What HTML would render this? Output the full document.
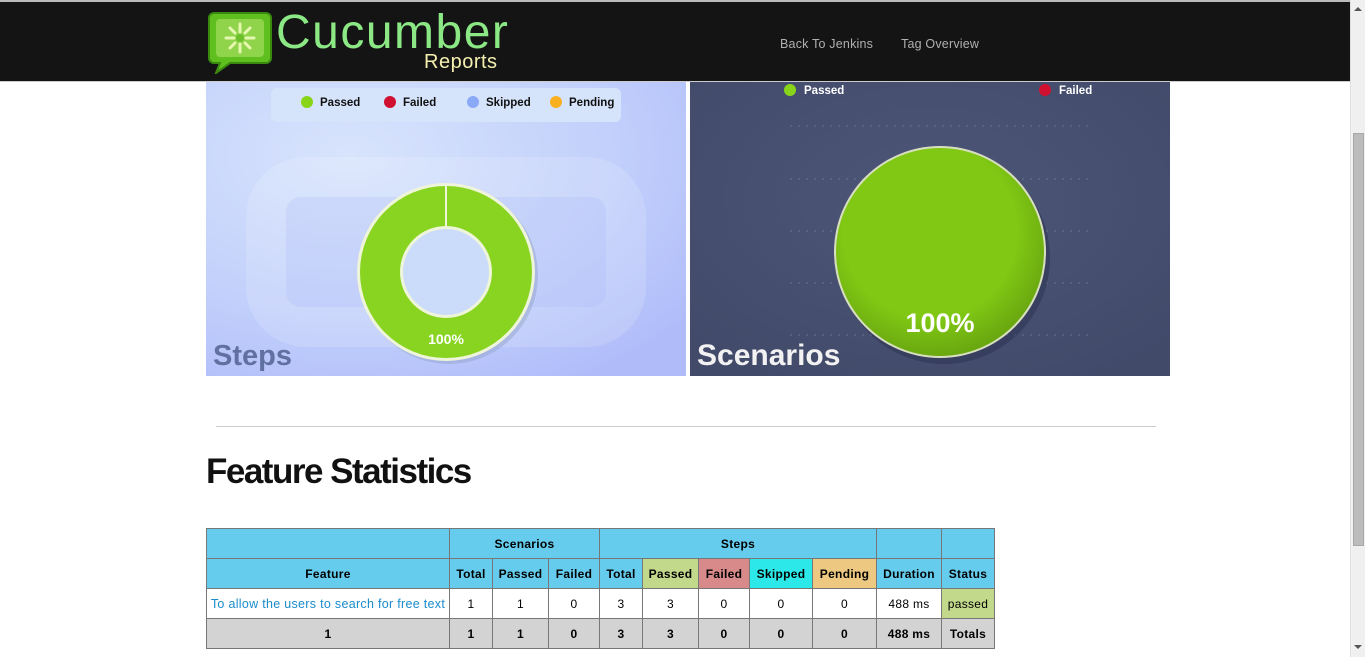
<!DOCTYPE html>
<html><head><meta charset="utf-8"><style>
*{margin:0;padding:0;box-sizing:border-box}
body{width:1365px;height:657px;overflow:hidden;background:#fff;font-family:"Liberation Sans",sans-serif;position:relative}
.hdr{position:absolute;left:0;top:0;width:1350px;height:82px;background:#141414;border-top:2px solid #bbb;border-bottom:1px solid #ccc}
.nav{position:absolute;top:35px;font-size:12.5px;color:#b0b0b0;letter-spacing:0.2px}
.sb{position:absolute;right:0;top:0;width:15px;height:657px;background:#f0f0f0;border-left:1px solid #e0e0e0}
.thumb{position:absolute;left:2px;top:133px;width:11px;height:413px;background:#bcbcbc;border:1px solid #a8a8a8}
table{position:absolute;left:206px;top:528px;border-collapse:collapse;font-size:12px;letter-spacing:0.3px}
td{border:1px solid #777;text-align:center;height:30px;padding:0 2px}
.h td{background:#66ccee;font-weight:bold}
.t td{background:#d3d3d3;font-weight:bold}
</style></head><body>
<div class="hdr">
<svg style="position:absolute;left:208px;top:10px" width="64" height="62" viewBox="0 0 64 62">
<path d="M6 1h52a5 5 0 0 1 5 5v40a5 5 0 0 1-5 5H22L8 61l4-10H6a5 5 0 0 1-5-5V6a5 5 0 0 1 5-5z" fill="#5fbf1f" stroke="#3a8a10" stroke-width="2"/>
<rect x="8" y="7" width="48" height="38" rx="4" fill="#8fd44a"/>
<g stroke="#e6f7b0" stroke-width="3" stroke-linecap="round">
<path d="M32 12v8M32 32v8M18 26h8M38 26h8M22 16l5 5M37 31l5 5M42 16l-5 5M27 31l-5 5"/></g>
<circle cx="32" cy="26" r="4" fill="#6bbf2a"/>
</svg>
<div style="position:absolute;left:276px;top:3px;font-size:48px;color:#8be884;letter-spacing:1.5px">Cucumber</div>
<div style="position:absolute;left:424px;top:49px;font-size:20px;color:#f5f0b0;letter-spacing:0.5px">Reports</div>
<div class="nav" style="left:780px">Back To Jenkins</div>
<div class="nav" style="left:901px">Tag Overview</div>
</div>

<svg style="position:absolute;left:206px;top:82px" width="480" height="294">
<defs><radialGradient id="g1" cx="0.3" cy="0.25" r="0.9"><stop offset="0" stop-color="#d8e4fc"/><stop offset="0.6" stop-color="#c2d0fb"/><stop offset="1" stop-color="#b0bcfa"/></radialGradient></defs>
<rect width="480" height="294" fill="url(#g1)"/>
<rect x="40" y="75" width="400" height="190" rx="60" fill="#fff" opacity="0.15"/>
<rect x="80" y="115" width="320" height="110" rx="15" fill="#a8b8f8" opacity="0.25"/>
<rect x="65" y="6" width="350" height="34" rx="6" fill="#d6e4fb"/>
<circle cx="101" cy="20" r="6" fill="#88d418"/><text x="114" y="24" font-size="11.5" font-weight="bold" fill="#111">Passed</text>
<circle cx="184" cy="20" r="6" fill="#d01030"/><text x="197" y="24" font-size="11.5" font-weight="bold" fill="#111">Failed</text>
<circle cx="267" cy="20" r="6" fill="#8aaaf8"/><text x="280" y="24" font-size="11.5" font-weight="bold" fill="#111">Skipped</text>
<circle cx="350" cy="20" r="6" fill="#f8b020"/><text x="363" y="24" font-size="11.5" font-weight="bold" fill="#111">Pending</text>
<circle cx="243" cy="193" r="89" fill="#8a9ac0" opacity="0.4"/>
<circle cx="240" cy="190" r="89" fill="#eef5d8"/>
<circle cx="240" cy="190" r="86" fill="#88d420"/>
<circle cx="240" cy="190" r="46" fill="#eef5d8"/>
<circle cx="240" cy="190" r="43" fill="#cbdcfb"/>
<line x1="240" y1="104" x2="240" y2="145" stroke="#eef5d8" stroke-width="2"/>
<text x="240" y="262" font-size="14" font-weight="bold" fill="#fff" text-anchor="middle">100%</text>
<text x="7" y="283" font-size="29" font-weight="bold" fill="#6070a0">Steps</text>
</svg>

<svg style="position:absolute;left:690px;top:82px" width="480" height="294">
<defs><radialGradient id="g2" cx="0.5" cy="0.4" r="0.7"><stop offset="0" stop-color="#4d5678"/><stop offset="1" stop-color="#424a6a"/></radialGradient>
<radialGradient id="g3" cx="0.45" cy="0.4" r="0.6"><stop offset="0.7" stop-color="#80c814"/><stop offset="1" stop-color="#6aa810"/></radialGradient></defs>
<rect width="480" height="294" fill="url(#g2)"/>
<g stroke="#6a7290" stroke-dasharray="2 6" stroke-width="1">
<path d="M100 44H400M100 97H400M100 149H400M100 201H400M100 253H400"/></g>
<circle cx="100" cy="8" r="6" fill="#88d418"/><text x="114" y="12" font-size="11.5" font-weight="bold" fill="#fff">Passed</text>
<circle cx="355" cy="8" r="6" fill="#d01030"/><text x="369" y="12" font-size="11.5" font-weight="bold" fill="#fff">Failed</text>
<circle cx="254" cy="176" r="106" fill="#2a3050" opacity="0.5"/>
<circle cx="250" cy="170" r="106" fill="#d8e0c0"/>
<circle cx="250" cy="170" r="104" fill="url(#g3)"/>
<text x="250" y="250" font-size="27" font-weight="bold" fill="#fff" text-anchor="middle">100%</text>
<text x="7" y="283" font-size="30" font-weight="bold" fill="#f2f2f2">Scenarios</text>
</svg>

<div style="position:absolute;left:216px;top:426px;width:940px;height:1px;background:#ccc"></div>
<div style="position:absolute;left:206px;top:452px;font-size:35px;font-weight:bold;color:#111;letter-spacing:-1.5px">Feature Statistics</div>

<table>
<tr class="h"><td style="width:243px"></td><td colspan="3">Scenarios</td><td colspan="5">Steps</td><td style="width:65px"></td><td style="width:53px"></td></tr>
<tr class="h"><td>Feature</td><td style="width:43px">Total</td><td style="width:56px">Passed</td><td style="width:51px">Failed</td><td style="width:43px">Total</td><td style="width:56px;background:#c2d88a">Passed</td><td style="width:51px;background:#d88a8a">Failed</td><td style="width:63px;background:#2ce8e8">Skipped</td><td style="width:64px;background:#ecc880">Pending</td><td>Duration</td><td>Status</td></tr>
<tr><td style="color:#1a8ccc;font-size:12.5px">To allow the users to search for free text</td><td>1</td><td>1</td><td>0</td><td>3</td><td>3</td><td>0</td><td>0</td><td>0</td><td>488 ms</td><td style="background:#c2d88a">passed</td></tr>
<tr class="t"><td>1</td><td>1</td><td>1</td><td>0</td><td>3</td><td>3</td><td>0</td><td>0</td><td>0</td><td>488 ms</td><td>Totals</td></tr>
</table>

<div class="sb"><div style="position:absolute;left:3px;top:7px;border:4px solid transparent;border-bottom:4px solid #555;border-top:0"></div><div class="thumb"></div><div style="position:absolute;left:3px;top:645px;border:4px solid transparent;border-top:4px solid #555;border-bottom:0"></div></div>
</body></html>
